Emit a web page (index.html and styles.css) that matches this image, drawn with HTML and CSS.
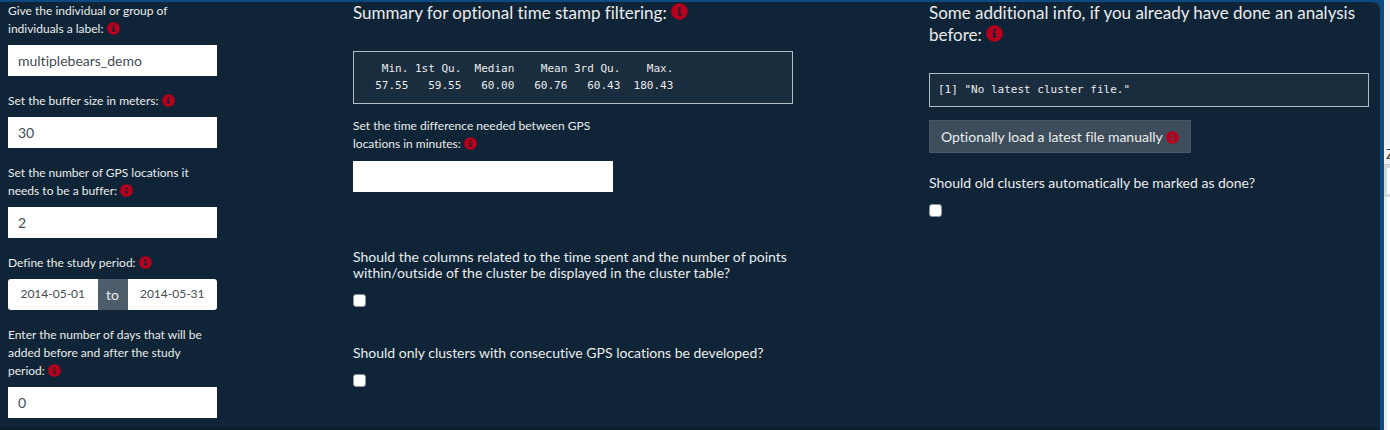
FILE: index.html
```html
<!DOCTYPE html>
<html lang="en">
<head>
<meta charset="utf-8">
<title>Cluster analysis settings</title>
<link rel="stylesheet" href="styles.css">
</head>
<body>
<svg class="defs" aria-hidden="true">
  <symbol id="info" viewBox="0 0 512 512">
    <path fill="currentColor" d="M256 8C119 8 8 119 8 256s111 248 248 248 248-111 248-248S393 8 256 8zm0 110a42 42 0 1 1 0 84 42 42 0 0 1 0-84zm56 254a12 12 0 0 1-12 12h-88a12 12 0 0 1-12-12v-24a12 12 0 0 1 12-12h12v-64h-12a12 12 0 0 1-12-12v-24a12 12 0 0 1 12-12h64a12 12 0 0 1 12 12v100h12a12 12 0 0 1 12 12v24z"/>
  </symbol>
</svg>
<div class="page">
  <main class="panel">
    <form class="columns">
      <section class="column basics">
        <div class="field">
          <label for="label">Give the individual or group of individuals a label: <svg class="icon"><use href="#info"/></svg></label>
          <input class="control" id="label" type="text" value="multiplebears_demo">
        </div>
        <div class="field">
          <label for="buffer">Set the buffer size in meters: <svg class="icon"><use href="#info"/></svg></label>
          <input class="control" id="buffer" type="text" inputmode="numeric" value="30">
        </div>
        <div class="field">
          <label for="count">Set the number of GPS locations it needs to be a buffer: <svg class="icon"><use href="#info"/></svg></label>
          <input class="control" id="count" type="text" inputmode="numeric" value="2">
        </div>
        <div class="field">
          <label for="from">Define the study period: <svg class="icon"><use href="#info"/></svg></label>
          <div class="range">
            <input class="control date" id="from" type="text" value="2014-05-01">
            <span class="to">to</span>
            <input class="control date" type="text" aria-label="End of study period" value="2014-05-31">
          </div>
        </div>
        <div class="field">
          <label for="days">Enter the number of days that will be added before and after the study period: <svg class="icon"><use href="#info"/></svg></label>
          <input class="control" id="days" type="text" inputmode="numeric" value="0">
        </div>
      </section>

      <section class="column filtering">
        <h4 class="heading">Summary for optional time stamp filtering: <svg class="icon"><use href="#info"/></svg></h4>
        <pre class="output summary">   Min. 1st Qu.  Median    Mean 3rd Qu.    Max. 
  57.55   59.55   60.00   60.76   60.43  180.43 </pre>
        <div class="field interval">
          <label for="minutes">Set the time difference needed between GPS locations in minutes: <svg class="icon"><use href="#info"/></svg></label>
          <input class="control" id="minutes" type="text">
        </div>
        <div class="question spaced">
          <label for="columns">Should the columns related to the time spent and the number of points within/outside of the cluster be displayed in the cluster table?</label>
          <input class="check" id="columns" type="checkbox">
        </div>
        <div class="question">
          <label for="consecutive">Should only clusters with consecutive GPS locations be developed?</label>
          <input class="check" id="consecutive" type="checkbox">
        </div>
      </section>

      <section class="column previous">
        <h4 class="heading">Some additional info, if you already have done an analysis before: <svg class="icon"><use href="#info"/></svg></h4>
        <pre class="output">[1] "No latest cluster file."</pre>
        <button class="load" type="button">Optionally load a latest file manually <svg class="icon"><use href="#info"/></svg></button>
        <div class="question">
          <label for="done">Should old clusters automatically be marked as done?</label>
          <input class="check" id="done" type="checkbox">
        </div>
      </section>
    </form>
  </main>
  <aside class="edge">
    <div class="edge-top">Z</div>
    <div class="edge-box"></div>
    <div class="edge-rest"></div>
  </aside>
</div>
</body>
</html>
```

FILE: styles.css
```css
* { box-sizing: border-box; }

body {
  margin: 0;
  overflow: hidden;
  background: #0f2537;
  color: #ebebeb;
  font: 12px/18px Lato, sans-serif;
  font-variant-ligatures: no-common-ligatures;
}

.defs { position: absolute; width: 0; height: 0; }

.page { display: flex; min-height: 100vh; }

.panel {
  flex: 1;
  background: #0b4a80;
  padding: 2px 4px 0 0;
  display: flex;
}

.columns {
  flex: 1;
  display: grid;
  grid-template-columns: 3fr 5fr 4fr;
  background: #0f2537;
  border-bottom: 3px solid #0c1d2c;
  border-top-right-radius: 8px;
}

.column { padding: 0 8px; min-width: 0; }

.basics {
  display: flex;
  flex-direction: column;
  gap: 16px;
  padding-right: 128px;
}

.filtering { padding-right: 127px; }

.previous { padding: 0 11px 0 9px; }

.field {
  display: flex;
  flex-direction: column;
  gap: 7px;
}

.icon {
  width: 13px;
  height: 13px;
  color: #b8001c;
  vertical-align: -2px;
}

.control {
  width: 100%;
  min-width: 0;
  height: 31px;
  padding: 0 10px;
  border: 0;
  border-radius: 0;
  background: #fff;
  color: #444c55;
  font: 14px Lato, sans-serif;
  font-variant-ligatures: no-common-ligatures;
}

.range {
  display: flex;
  border-radius: 3px;
  overflow: hidden;
}

.date { flex: 1; padding: 0 0 2px; text-align: center; font-size: 12px; }

.to {
  width: 30px;
  background: #4e5d6c;
  font-size: 14px;
  line-height: 31px;
  text-align: center;
}

.heading {
  margin: 0;
  font-size: 17px;
  font-weight: 400;
  line-height: 22px;
}

.heading .icon { width: 17px; height: 17px; vertical-align: -1px; }

.output {
  margin: 27px 0 13px;
  padding: 7px 8px 8px;
  border: 1px solid #b4bcc3;
  background: #1a2d3e;
  font: 11px/17px "DejaVu Sans Mono", monospace;
}

.summary { padding: 8px 8px 9px; }

.interval { width: 260px; gap: 8px; }

.question {
  display: flex;
  flex-direction: column;
  align-items: flex-start;
  gap: 13px;
  font-size: 14px;
  line-height: 16px;
}

.spaced { margin: 57px 0 38px; }

.check {
  appearance: none;
  width: 13px;
  height: 13px;
  margin: 0;
  border: 1px solid #8b939a;
  border-radius: 3px;
  background: #fff;
}

.load {
  display: block;
  height: 33px;
  margin: 0 0 22px;
  padding: 0 11px;
  border: 1px solid #4a5865;
  background: #3e4d5b;
  color: #ebebeb;
  font: 14px Lato, sans-serif;
  font-variant-ligatures: no-common-ligatures;
}

.edge {
  width: 6px;
  display: flex;
  flex-direction: column;
  background: #ececec;
  overflow: hidden;
}

.edge-top {
  height: 165px;
  padding: 145px 0 0 2px;
  background: #f3f1f0;
  color: #444;
  border-bottom: 1px solid #ccc;
  font-size: 14px;
}

.edge-box { height: 32px; border: 3px solid #d8d8d8; border-right: 0; background: #fff; }

.edge-rest { flex: 1; margin-left: 3px; background: #fff; }
```
